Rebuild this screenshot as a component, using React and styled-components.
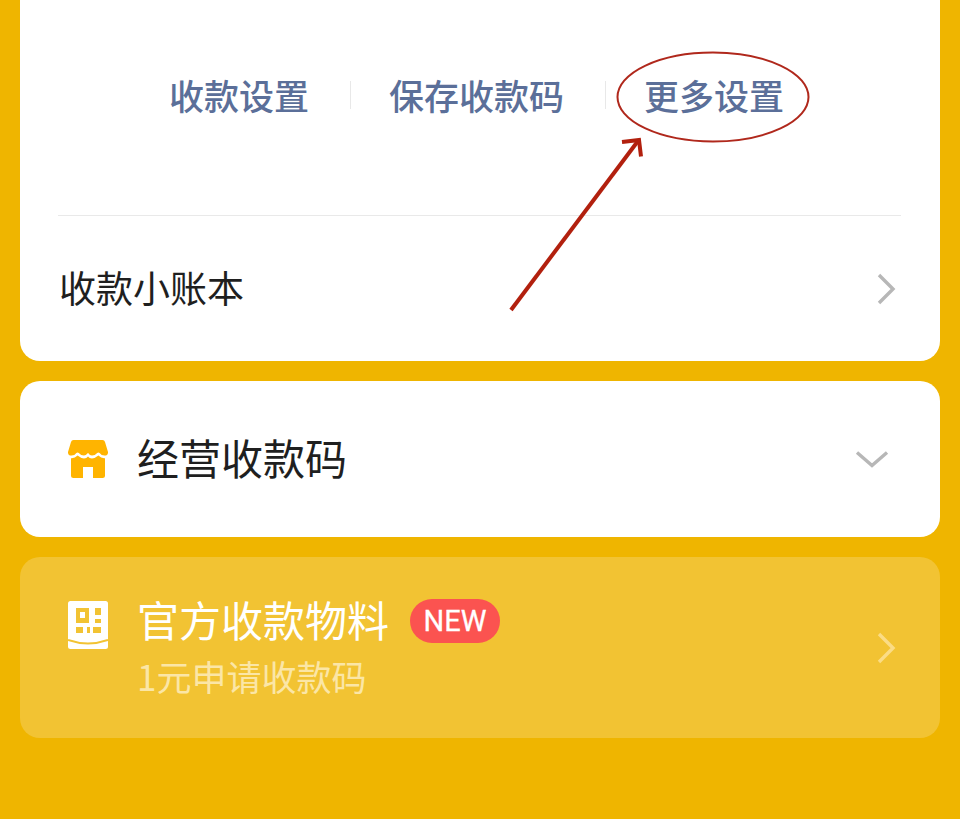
import React from 'react';
import styled, { createGlobalStyle } from 'styled-components';

const GlobalStyle = createGlobalStyle`
    html, body {
        margin: 0;
        padding: 0;
        background: #efb500;
        font-family: "Noto Sans CJK SC", "Noto Sans", sans-serif;
    }
`;

const StoreIcon = () => (
    <svg width="40" height="38" viewBox="0 0 40 38">
        <path d="M5.500 0 H34.500 Q36.500 0 37 2 L40 12 Q40.200 15.600 36.400 15.600 Q33.400 15.600 31.600 13 Q30.400 11.800 29.200 13 Q27 15.600 24 15.600 Q21.600 15.600 20.800 13.800 Q20 12.400 19.200 13.800 Q18 15.600 16 15.600 Q13 15.600 10.800 13 Q9.600 11.800 8.400 13 Q6.600 15.600 3.600 15.600 Q-0.200 15.600 0 12 L3 2 Q3.500 0 5.500 0 Z" fill="#ffb400" />
        <path d="M3 18.200 Q6.600 18.600 9.600 15.600 Q12.800 18.400 16 18.400 Q18.600 18.400 20 16.400 Q21.400 18.400 24 18.400 Q27.200 18.400 30.400 15.600 Q33.400 18.600 37 18.200 V35.500 Q37 38 34.500 38 H25 V27 H15 V38 H5.500 Q3 38 3 35.500 Z" fill="#ffb400" />
    </svg>
);

const QrIcon = ({ ink }) => (
    <svg width="40" height="48" viewBox="0 0 40 48">
        <rect width="40" height="48" rx="2.500" fill="#fff" />
        <rect x="8" y="7" width="13" height="15" fill={ink} />
        <rect x="12" y="11" width="5" height="6" fill="#fff" />
        <rect x="27" y="7" width="6" height="7" fill={ink} />
        <rect x="27" y="18" width="6" height="4" fill={ink} />
        <rect x="8" y="26" width="7" height="6" fill={ink} />
        <rect x="19" y="26" width="3" height="6" fill={ink} />
        <rect x="25" y="26" width="8" height="6" fill={ink} />
        <path d="M0 39 Q20 46 40 39" fill="none" stroke={ink} strokeWidth="2" />
    </svg>
);

const Chevron = ({ color, down }) => (
    <svg width="34" height="34" viewBox="0 0 34 34">
        <path
            d={down ? 'M2 10.500 L17 23.500 L32 10.500' : 'M11 3 L25 17 L11 31'}
            fill="none"
            stroke={color}
            strokeWidth="3.400"
        />
    </svg>
);

const App = () => {
    return (
        <StyledPage>
            <GlobalStyle />
            <StyledTopCard>
                <StyledActions>
                    <StyledAction>收款设置</StyledAction>
                    <StyledActionDivider />
                    <StyledAction>保存收款码</StyledAction>
                    <StyledActionDivider />
                    <StyledAction>更多设置</StyledAction>
                </StyledActions>
                <StyledRule />
                <StyledLedgerRow>
                    <StyledLedgerText>收款小账本</StyledLedgerText>
                    <Chevron color="#b7b7b7" />
                </StyledLedgerRow>
            </StyledTopCard>

            <StyledBusinessCard>
                <StoreIcon />
                <StyledBusinessText>经营收款码</StyledBusinessText>
                <Chevron color="#b7b7b7" down />
            </StyledBusinessCard>

            <StyledPromoCard>
                <StyledPromoIcon>
                    <QrIcon ink="#f2c333" />
                </StyledPromoIcon>
                <StyledPromoBody>
                    <StyledPromoTitleRow>
                        <StyledPromoTitle>官方收款物料</StyledPromoTitle>
                        <StyledBadge>NEW</StyledBadge>
                    </StyledPromoTitleRow>
                    <StyledPromoSub>1元申请收款码</StyledPromoSub>
                </StyledPromoBody>
                <Chevron color="#fbdc85" />
            </StyledPromoCard>

            <StyledAnnotation width="960" height="819" viewBox="0 0 960 819">
                <ellipse cx="713" cy="97" rx="95.500" ry="44.500" fill="none" stroke="#b0281c" strokeWidth="2" />
                <path d="M511 310 L638 141" fill="none" stroke="#b2200e" strokeWidth="4" />
                <path d="M622 142 L639 140 L641 156.500" fill="none" stroke="#b2200e" strokeWidth="4" />
            </StyledAnnotation>
        </StyledPage>
    );
};

export default App;

const StyledPage = styled.div`
    position: relative;
    width: 960px;
    height: 819px;
    overflow: hidden;
    background: #efb500;
    padding: 0 20px;
    box-sizing: border-box;
    display: flex;
    flex-direction: column;
    gap: 20px;
`;

const StyledTopCard = styled.div`
    height: 361px;
    background: #fff;
    border-radius: 0 0 20px 20px;
    display: flex;
    flex-direction: column;
    flex-shrink: 0;
`;

const StyledActions = styled.div`
    height: 215px;
    padding: 0 0 26px 149px;
    box-sizing: border-box;
    display: flex;
    align-items: center;
    flex-shrink: 0;
`;

const StyledAction = styled.div`
    font-size: 35px;
    font-weight: 500;
    line-height: 44px;
    color: #5b6f99;
    white-space: nowrap;
`;

const StyledActionDivider = styled.div`
    width: 1px;
    height: 28px;
    background: #e8e8e8;
    margin: 0 38px 0 41px;
`;

const StyledRule = styled.div`
    height: 1px;
    background: #e9e9e9;
    margin: 0 39px 0 38px;
`;

const StyledLedgerRow = styled.div`
    flex: 1;
    padding: 0 38px 0 39px;
    display: flex;
    align-items: center;
    justify-content: space-between;
    box-sizing: border-box;
`;

const StyledLedgerText = styled.div`
    font-size: 37px;
    line-height: 48px;
    color: #1f1f1f;
    padding-bottom: 4px;
`;

const StyledBusinessCard = styled.div`
    height: 156px;
    background: #fff;
    border-radius: 20px;
    padding: 0 51px 0 48px;
    display: flex;
    align-items: center;
    gap: 29px;
    box-sizing: border-box;
    flex-shrink: 0;
`;

const StyledBusinessText = styled.div`
    flex: 1;
    font-size: 42px;
    line-height: 54px;
    color: #1f1f1f;
    padding-bottom: 4px;
`;

const StyledPromoCard = styled.div`
    height: 181px;
    background: #f2c333;
    border-radius: 20px;
    padding: 0 38px 0 48px;
    display: flex;
    align-items: center;
    gap: 29px;
    box-sizing: border-box;
    flex-shrink: 0;
`;

const StyledPromoIcon = styled.div`
    align-self: flex-start;
    margin-top: 44px;
    height: 48px;
    line-height: 0;
`;

const StyledPromoBody = styled.div`
    flex: 1;
    display: flex;
    flex-direction: column;
    gap: 8px;
    padding-bottom: 5px;
`;

const StyledPromoTitleRow = styled.div`
    display: flex;
    align-items: center;
    gap: 21px;
`;

const StyledPromoTitle = styled.div`
    font-size: 42px;
    line-height: 54px;
    color: #fff;
`;

const StyledBadge = styled.div`
    width: 90px;
    height: 44px;
    margin-top: 3px;
    border-radius: 22px;
    background: #fb5350;
    color: #fff;
    font-family: "Roboto", "Noto Sans", sans-serif;
    font-size: 29px;
    font-weight: 400;
    -webkit-text-stroke: 0.3px #fff;
    display: flex;
    align-items: center;
    justify-content: center;
`;

const StyledPromoSub = styled.div`
    font-size: 35px;
    line-height: 44px;
    color: #fbe6a6;
`;

const StyledAnnotation = styled.svg`
    position: absolute;
    top: 0;
    left: 0;
    pointer-events: none;
`;
